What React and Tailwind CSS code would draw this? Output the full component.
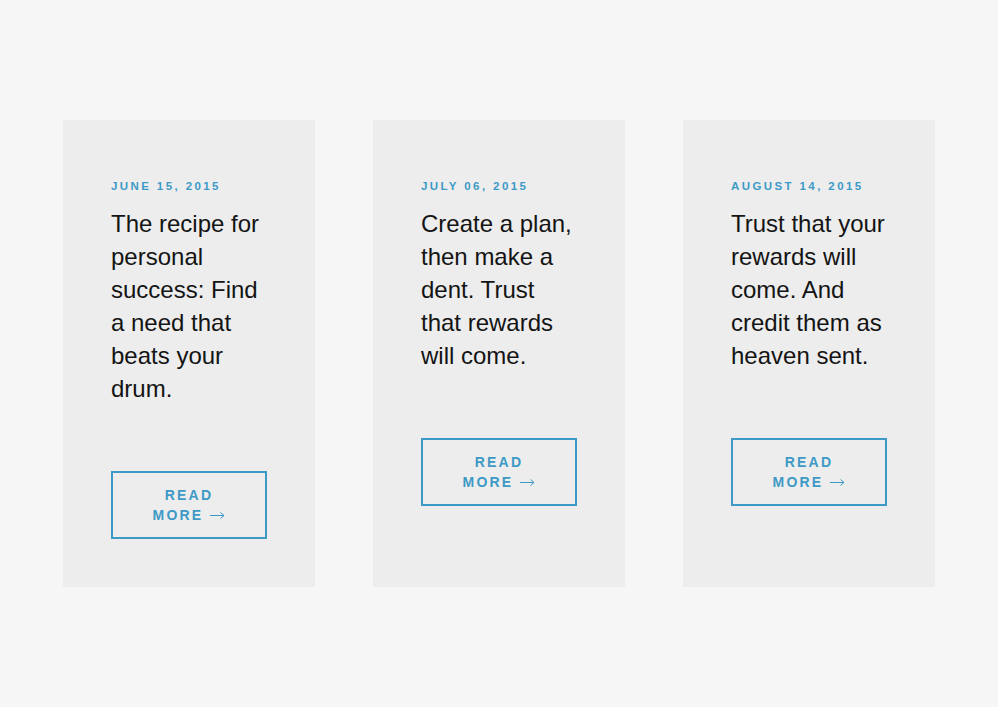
import React from "react";

const posts = [
  {
    date: "June 15, 2015",
    title: "The recipe for personal success: Find a need that beats your drum.",
  },
  {
    date: "July 06, 2015",
    title: "Create a plan, then make a dent. Trust that rewards will come.",
  },
  {
    date: "August 14, 2015",
    title: "Trust that your rewards will come. And credit them as heaven sent.",
  },
];

const Arrow = () => (
  <svg width="15" height="8" viewBox="0 0 15 8" className="ml-[7px] inline-block align-middle">
    <path d="M0 4.5H14M10.5 1.5L14 4.5L10.5 7.5" fill="none" stroke="currentColor" strokeWidth="1" />
  </svg>
);

const PostCard = ({ date, title }) => {
  return (
    <div className="w-[252px] bg-[#ededed] pt-[58px] pb-[48px] px-[48px]">
      <div className="text-[11.5px] leading-4 font-bold uppercase tracking-[2.4px] text-[#3d9ac6]">
        {date}
      </div>
      <h2 className="mt-[13px] text-[24px] leading-[33px] text-[#141414]">{title}</h2>
      <a
        href="#"
        className="mt-[66px] flex h-[68px] w-[156px] flex-col items-center justify-center border-2 border-[#3d9ac6] text-[14px] leading-5 font-bold uppercase tracking-[2.2px] text-[#3d9ac6]"
      >
        <span>Read</span>
        <span className="flex items-center">
          More
          <Arrow />
        </span>
      </a>
    </div>
  );
};

export default function App() {
  return (
    <div
      className="min-h-[707px] bg-[#f6f6f6] pt-[120px]"
      style={{ fontFamily: '"Liberation Sans", Arial, sans-serif' }}
    >
      <div className="flex items-stretch justify-center gap-[58px]">
        {posts.map((post, i) => (
          <PostCard key={i} {...post} />
        ))}
      </div>
    </div>
  );
}
